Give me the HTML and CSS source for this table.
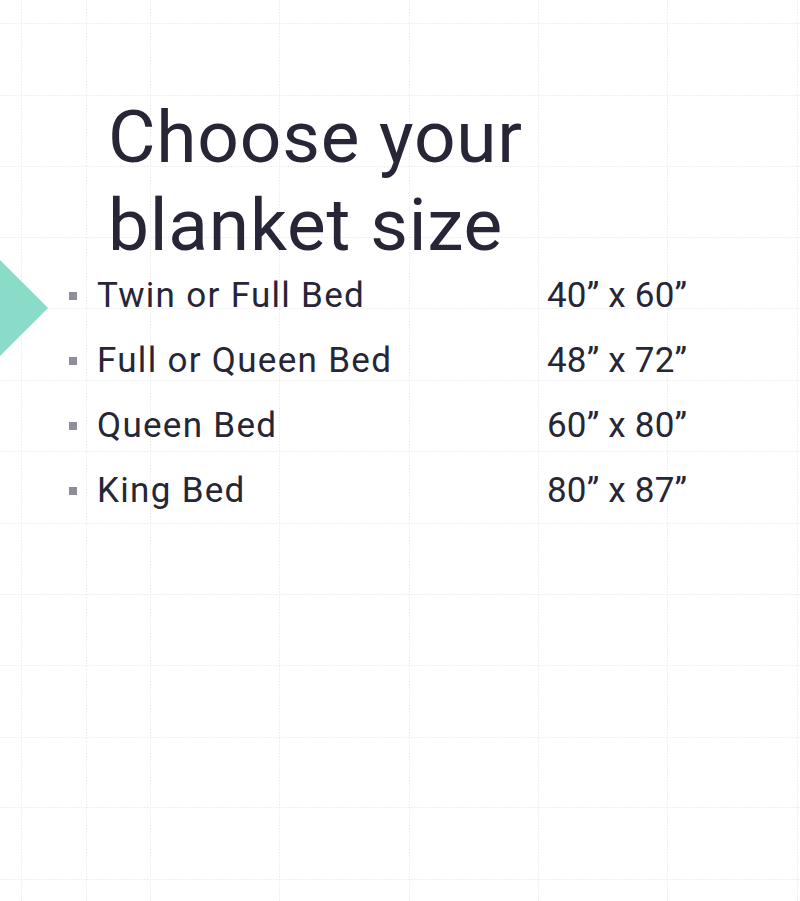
FILE: index.html
```html
<!DOCTYPE html>
<html lang="en">
<head>
<meta charset="utf-8">
<title>Choose your blanket size</title>
<link rel="stylesheet" href="styles.css">
</head>
<body>
<svg class="grid" width="800" height="901" viewBox="0 0 800 901" aria-hidden="true">
  <g class="grid-lines">
    <line x1="21.5" y1="0" x2="21.5" y2="901"/>
    <line x1="86.5" y1="0" x2="86.5" y2="901"/>
    <line x1="150.5" y1="0" x2="150.5" y2="901"/>
    <line x1="279.5" y1="0" x2="279.5" y2="901"/>
    <line x1="409.5" y1="0" x2="409.5" y2="901"/>
    <line x1="538.5" y1="0" x2="538.5" y2="901"/>
    <line x1="667.5" y1="0" x2="667.5" y2="901"/>
    <line x1="797.5" y1="0" x2="797.5" y2="901"/>
    <line x1="0" y1="23.5" x2="800" y2="23.5"/>
    <line x1="0" y1="95.5" x2="800" y2="95.5"/>
    <line x1="0" y1="166.5" x2="800" y2="166.5"/>
    <line x1="0" y1="237.5" x2="800" y2="237.5"/>
    <line x1="0" y1="308.5" x2="800" y2="308.5"/>
    <line x1="0" y1="380.5" x2="800" y2="380.5"/>
    <line x1="0" y1="451.5" x2="800" y2="451.5"/>
    <line x1="0" y1="523.5" x2="800" y2="523.5"/>
    <line x1="0" y1="594.5" x2="800" y2="594.5"/>
    <line x1="0" y1="665.5" x2="800" y2="665.5"/>
    <line x1="0" y1="737.5" x2="800" y2="737.5"/>
    <line x1="0" y1="807.5" x2="800" y2="807.5"/>
    <line x1="0" y1="879.5" x2="800" y2="879.5"/>
  </g>
</svg>
<div class="diamond" aria-hidden="true"></div>
<main class="slide">
  <h1 class="title">Choose your<br>blanket size</h1>
  <ul class="sizes">
    <li class="row"><span class="bullet"></span><span class="name">Twin or Full Bed</span><span class="dim">40” x 60”</span></li>
    <li class="row"><span class="bullet"></span><span class="name">Full or Queen Bed</span><span class="dim">48” x 72”</span></li>
    <li class="row"><span class="bullet"></span><span class="name">Queen Bed</span><span class="dim">60” x 80”</span></li>
    <li class="row"><span class="bullet"></span><span class="name">King Bed</span><span class="dim">80” x 87”</span></li>
  </ul>
</main>
</body>
</html>
```
FILE: styles.css
```css
html, body {
  margin: 0;
  padding: 0;
  background: #ffffff;
}
body {
  width: 800px;
  height: 901px;
  position: relative;
  overflow: hidden;
  font-family: Roboto, "Liberation Sans", sans-serif;
  color: #262637;
}
.grid {
  position: absolute;
  left: 0;
  top: 0;
  z-index: 0;
}
.grid-lines line {
  stroke: #ebebeb;
  stroke-width: 1;
  stroke-dasharray: 1.5 1.5;
}
.diamond {
  position: absolute;
  left: -34px;
  top: 274px;
  width: 68px;
  height: 68px;
  background: #8adcc8;
  transform: rotate(45deg);
  z-index: 1;
}
.slide {
  position: relative;
  z-index: 2;
  padding: 93px 0 0 0;
}
.title {
  margin: 0 0 0 108px;
  font-weight: 400;
  font-size: 73px;
  line-height: 88px;
  letter-spacing: 0.8px;
  color: #262637;
}
.sizes {
  list-style: none;
  margin: -6px 0 0 0;
  padding: 0;
}
.row {
  display: grid;
  grid-template-columns: 28px 450px auto;
  align-items: baseline;
  padding-left: 69px;
  font-size: 35px;
  line-height: 65px;
}
.bullet {
  width: 8px;
  height: 8px;
  background: #8e8e99;
  align-self: center;
}
.name {
  white-space: nowrap;
  letter-spacing: 1.3px;
}
.dim {
  white-space: nowrap;
  letter-spacing: 0.2px;
}
```
